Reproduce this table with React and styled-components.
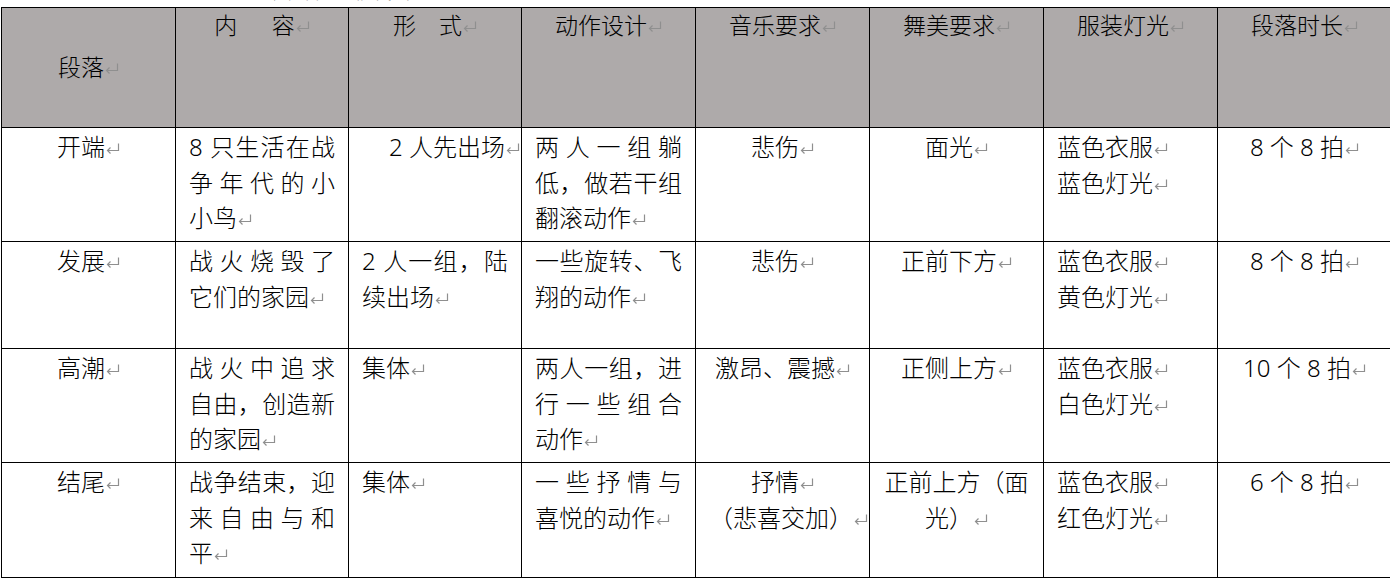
import React from 'react';
import styled, { createGlobalStyle } from 'styled-components';

const GlobalStyle = createGlobalStyle`
  html, body {
    margin: 0;
    padding: 0;
    background: #fff;
    overflow: hidden;
  }
  body {
    font-family: "Noto Sans", "Noto Sans CJK SC", sans-serif;
    font-weight: 300;
    color: #000;
  }
`;

const Page = styled.div`
  width: 1390px;
  height: 578px;
  overflow: hidden;
  background: #fff;
`;

// the title line above the table is cut off, only the glyph bottoms show
const Caption = styled.div`
  height: 7px;
  overflow: hidden;
  padding-left: 272px;
  font-size: 24px;
  line-height: 35px;
  span {
    display: block;
    margin-top: -29px;
  }
`;

const Grid = styled.div`
  display: grid;
  grid-template-columns: 174px 173px 173px 174px 174px 174px 174px 174px;
  grid-template-rows: 120px 114px 107px 114px 115px;
  width: max-content;
  margin-left: 1px;
  border-top: 1px solid #000;
  border-left: 1px solid #000;
`;

const Cell = styled.div`
  box-sizing: border-box;
  display: flex;
  flex-direction: column;
  justify-content: ${p => (p.$middle ? 'center' : 'flex-start')};
  padding: ${p => (p.$head ? '0' : '1px')} ${p => (p.$hang ? '1px' : '13px')} 0 13px;
  border-right: 1px solid #000;
  border-bottom: 1px solid #000;
  background: ${p => (p.$head ? '#aeaaaa' : '#fff')};
  font-size: ${p => (p.$head ? '23px' : '24px')};
  line-height: 35.5px;
  text-align: ${p => p.$align || 'left'};
  overflow: hidden;
`;

const Line = styled.div`
  white-space: ${p => (p.$full ? 'normal' : 'nowrap')};
  text-align-last: ${p => (p.$full ? 'justify' : 'auto')};
`;

const Mark = styled.svg`
  width: 14px;
  height: 11px;
  margin-left: 1px;
  vertical-align: 2px;
  fill: none;
  stroke: #8f8f8f;
  stroke-width: 1.2;
`;

const Ret = () => (
  <Mark viewBox="0 0 14 11">
    <path d="M12.5 0.5V7.5H1.5M4.5 4.5L1.5 7.5L4.5 10.5" />
  </Mark>
);

const head = ['段落', '内\u3000\u2002容', '形\u3000式', '动作设计', '音乐要求', '舞美要求', '服装灯光', '段落时长'];

// j: justified paragraph, every line but the last is spread to full width
const rows = [
  [
    { a: 'center', t: ['开端↵'] },
    { j: true, t: ['8 只生活在战', '争年代的小', '小鸟↵'] },
    { a: 'right', hang: true, t: ['2 人先出场↵'] },
    { j: true, t: ['两人一组躺', '低，做若干组', '翻滚动作↵'] },
    { a: 'center', t: ['悲伤↵'] },
    { a: 'center', t: ['面光↵'] },
    { t: ['蓝色衣服↵', '蓝色灯光↵'] },
    { a: 'center', t: ['8 个 8 拍↵'] },
  ],
  [
    { a: 'center', t: ['发展↵'] },
    { j: true, t: ['战火烧毁了', '它们的家园↵'] },
    { j: true, t: ['2 人一组，陆', '续出场↵'] },
    { j: true, t: ['一些旋转、飞', '翔的动作↵'] },
    { a: 'center', t: ['悲伤↵'] },
    { a: 'center', t: ['正前下方↵'] },
    { t: ['蓝色衣服↵', '黄色灯光↵'] },
    { a: 'center', t: ['8 个 8 拍↵'] },
  ],
  [
    { a: 'center', t: ['高潮↵'] },
    { j: true, t: ['战火中追求', '自由，创造新', '的家园↵'] },
    { t: ['集体↵'] },
    { j: true, t: ['两人一组，进', '行一些组合', '动作↵'] },
    { a: 'center', t: ['激昂、震撼↵'] },
    { a: 'center', t: ['正侧上方↵'] },
    { t: ['蓝色衣服↵', '白色灯光↵'] },
    { a: 'center', t: ['10 个 8 拍↵'] },
  ],
  [
    { a: 'center', t: ['结尾↵'] },
    { j: true, t: ['战争结束，迎', '来自由与和', '平↵'] },
    { t: ['集体↵'] },
    { j: true, t: ['一些抒情与', '喜悦的动作↵'] },
    { a: 'center', t: ['抒情↵', '（悲喜交加）↵'] },
    { a: 'center', t: ['正前上方（面', '光）↵'] },
    { t: ['蓝色衣服↵', '红色灯光↵'] },
    { a: 'center', t: ['6 个 8 拍↵'] },
  ],
];

const Text = ({ value }) => {
  const hasMark = value.endsWith('↵');
  return (
    <>
      {hasMark ? value.slice(0, -1) : value}
      {hasMark && <Ret />}
    </>
  );
};

export default function App() {
  return (
    <Page>
      <GlobalStyle />
      <Caption>
        <span>舞蹈编排设计</span>
      </Caption>
      <Grid>
        {head.map((h, i) => (
          <Cell key={h} $head $align="center" $middle={i === 0}>
            <Line>
              <Text value={h + '↵'} />
            </Line>
          </Cell>
        ))}
        {rows.map((row, r) =>
          row.map((c, i) => (
            <Cell key={r + '-' + i} $align={c.a} $hang={c.hang}>
              {c.t.map((line, k) => (
                <Line key={k} $full={c.j && k < c.t.length - 1}>
                  <Text value={line} />
                </Line>
              ))}
            </Cell>
          ))
        )}
      </Grid>
    </Page>
  );
}
